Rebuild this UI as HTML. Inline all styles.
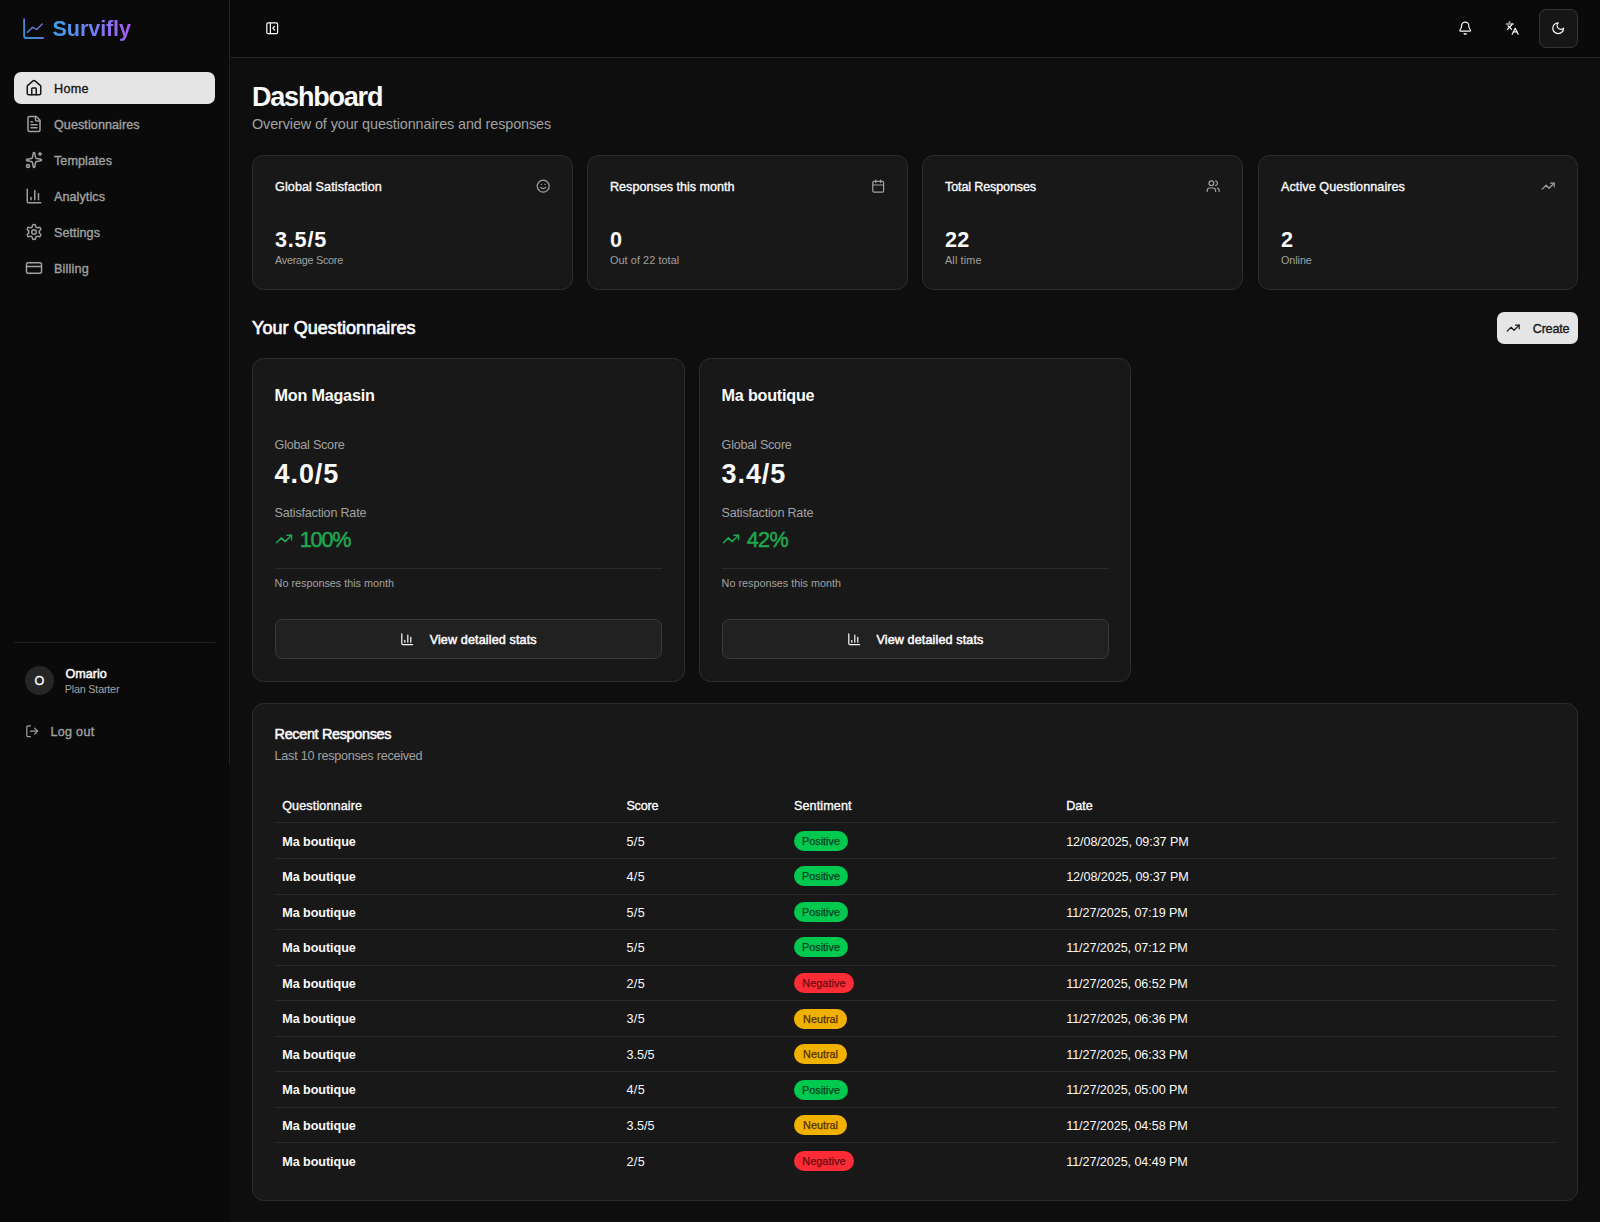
<!DOCTYPE html>
<html lang="en">
<head>
<meta charset="utf-8">
<title>Survifly - Dashboard</title>
<style>
*{box-sizing:border-box;margin:0;padding:0}
html,body{width:1600px;height:1222px;overflow:hidden;background:#0a0a0a;color:#fafafa;
  font-family:"Liberation Sans",sans-serif;font-size:12.6px;line-height:18px;font-weight:400}
body{position:relative}
#main{position:absolute;left:230.6px;top:58px;right:0;bottom:0;background:#0e0e0e}
.ic{display:block;flex:none}
.abs{position:absolute;white-space:nowrap}
.mut{color:#a1a1a1}
.md{-webkit-text-stroke:0.35px currentColor}
.md5{-webkit-text-stroke:0.5px currentColor}
.sb{font-weight:700}
/* sidebar */
#side{position:absolute;left:0;top:0;width:230px;height:765px;border-right:1px solid #222;background:#0a0a0a}
#logo{position:absolute;left:21px;top:16.2px;display:flex;align-items:center;gap:6.4px;height:25.2px}
#logo .t{position:relative;top:.7px;font-size:21.6px;font-weight:700;line-height:28.8px;letter-spacing:-0.11px;background:linear-gradient(90deg,#3aa3f2,#aa5cf6);-webkit-background-clip:text;background-clip:text;color:transparent}
.nav{position:absolute;left:14px;width:201px;height:32.4px;border-radius:7.2px;display:flex;align-items:center;gap:10.8px;padding-left:11.2px;color:#a1a1a1}
.nav.on{background:#e5e5e5;color:#171717}
.nav span{font-size:12.6px;position:relative;top:1.3px;letter-spacing:.07px}
#sep{position:absolute;left:14px;top:642px;width:201px;height:1px;background:#222}
#av{position:absolute;left:25px;top:666px;width:29px;height:29px;padding-top:1.4px;border-radius:50%;background:#262626;display:flex;align-items:center;justify-content:center;font-size:12.6px}
/* header */
#hdr{position:absolute;left:230px;top:0;right:0;height:58px;border-bottom:1px solid #222}
.hb{position:absolute;top:8px;width:39.6px;height:39.6px;display:flex;align-items:center;justify-content:center;border-radius:7.2px}
/* cards */
.card{position:absolute;background:#181818;border:1px solid #2d2d2d;border-radius:11.5px}
.card > *{white-space:nowrap}
.stat{top:155px;width:321px;height:135px}
.stat .ttl{position:absolute;left:22px;top:21.6px;line-height:18px;font-size:12.6px}
.stat .sic{position:absolute;right:21.6px;top:23.4px;color:#a1a1a1}
.stat .val{position:absolute;left:22px;top:70.1px;font-size:21.6px;line-height:28.8px;font-weight:700}
.stat .cap{position:absolute;left:22px;top:97.2px;font-size:10.8px;line-height:14.4px;color:#a1a1a1}
.q{top:358px;width:433px;height:324px}
.q > *{position:absolute;left:21.6px}
.q .ttl{top:23.7px;font-size:16.2px;line-height:25.2px;letter-spacing:-.23px}
.q .l1{top:76.6px;color:#a1a1a1;letter-spacing:-.23px}
.q .v1{top:98.5px;font-size:27px;line-height:32.4px;font-weight:700;letter-spacing:.9px}
.q .l2{top:144.8px;color:#a1a1a1;letter-spacing:-.21px}
.q .v2{top:165.9px;font-size:21.6px;line-height:28.8px;color:#1fa64f;display:flex;align-items:center;gap:7.2px;letter-spacing:-1.2px}
.q .v2 span{position:relative;top:1px}
.q .hr{top:208.6px;right:21.6px;height:1px;background:#2a2a2a}
.q .nr{top:217.3px;font-size:10.8px;line-height:14.4px;color:#a1a1a1}
.q .btn{top:260px;right:21.6px;height:39.6px;border:1px solid #3a3a3a;background:#212121;border-radius:7.2px;display:flex;align-items:center;justify-content:center;gap:15px;padding-right:0}
.q .btn span{position:relative;top:1px;letter-spacing:.12px}
#rr{left:252px;top:703px;width:1326px;height:498px}
#rr .ttl{position:absolute;left:21.6px;top:20.6px;font-size:14.4px;line-height:18px}
.tr{position:absolute;left:21.6px;right:21.4px}
.tr.bb{border-bottom:1px solid #2a2a2a}
.tr > span{position:absolute;top:0;bottom:0;display:flex;align-items:center;white-space:nowrap}
.tr > span.t{padding-top:1.4px}
.tr.h > span.t{padding-top:3.4px}
.tr.r0 > span.t{padding-top:3.4px}
.c1{left:7.6px}.c2{left:351.8px}.c3{left:519.4px}.c4{left:791.6px}
.tr > span.c3{display:block}
.badge{position:absolute;left:0;display:flex;align-items:center;justify-content:center;height:20px;border-radius:10px;font-size:10.8px;line-height:14.4px;-webkit-text-stroke:.25px currentColor}
.pos{width:54px}.neg{width:60px}.neu{width:53px}
.pos{background:#00c950;color:#06401f}
.neg{background:#fb2c36;color:#650e13;letter-spacing:.1px}
.neu{background:#f0b100;color:#552f07}

.q2 .hr,.q2 .btn{right:21px}

</style>
</head>
<body>
<main id="main"></main>
<aside id="side">
  <div id="logo"><svg class="ic" style="width:25.2px;height:25.2px" viewBox="0 0 24 24" fill="none" stroke="url(#lg)" stroke-width="1.8" stroke-linecap="round" stroke-linejoin="round" opacity=".88"><defs><linearGradient id="lg" gradientUnits="userSpaceOnUse" x1="2" y1="22" x2="22" y2="2"><stop offset="0" stop-color="#2fa9ee"/><stop offset="1" stop-color="#a66cf5"/></linearGradient></defs><path d="M3 3v16a2 2 0 0 0 2 2h16"/><path stroke-width="1.35" d="M6.100 15.600 11 10.800 15 12.800 20.200 7.600"/></svg><span class="t">Survifly</span></div>
  <div class="nav on" style="top:72px"><svg class="ic" style="width:18px;height:18px;" viewBox="0 0 24 24" fill="none" stroke="currentColor" stroke-width="2" stroke-linecap="round" stroke-linejoin="round" ><path d="M15 21v-8a1 1 0 0 0-1-1h-4a1 1 0 0 0-1 1v8"/><path d="M3 10a2 2 0 0 1 .709-1.528l7-5.999a2 2 0 0 1 2.582 0l7 5.999A2 2 0 0 1 21 10v9a2 2 0 0 1-2 2H5a2 2 0 0 1-2-2z"/></svg><span class="md" style="letter-spacing:.3px">Home</span></div>
  <div class="nav" style="top:108px"><svg class="ic" style="width:18px;height:18px;" viewBox="0 0 24 24" fill="none" stroke="currentColor" stroke-width="2" stroke-linecap="round" stroke-linejoin="round" ><path d="M15 2H6a2 2 0 0 0-2 2v16a2 2 0 0 0 2 2h12a2 2 0 0 0 2-2V7Z"/><path d="M14 2v4a2 2 0 0 0 2 2h4"/><path d="M10 9H8"/><path d="M16 13H8"/><path d="M16 17H8"/></svg><span class="md">Questionnaires</span></div>
  <div class="nav" style="top:144px"><svg class="ic" style="width:18px;height:18px;" viewBox="0 0 24 24" fill="none" stroke="currentColor" stroke-width="2" stroke-linecap="round" stroke-linejoin="round" ><path d="M11.017 2.814a1 1 0 0 1 1.966 0l1.051 5.558a2 2 0 0 0 1.594 1.594l5.558 1.051a1 1 0 0 1 0 1.966l-5.558 1.051a2 2 0 0 0-1.594 1.594l-1.051 5.558a1 1 0 0 1-1.966 0l-1.051-5.558a2 2 0 0 0-1.594-1.594l-5.558-1.051a1 1 0 0 1 0-1.966l5.558-1.051a2 2 0 0 0 1.594-1.594z"/><path d="M20 2v4"/><path d="M22 4h-4"/><circle cx="4" cy="20" r="2"/></svg><span class="md">Templates</span></div>
  <div class="nav" style="top:180px"><svg class="ic" style="width:18px;height:18px;" viewBox="0 0 24 24" fill="none" stroke="currentColor" stroke-width="2" stroke-linecap="round" stroke-linejoin="round" ><path d="M3 3v16a2 2 0 0 0 2 2h16"/><path d="M18 17V9"/><path d="M13 17V5"/><path d="M8 17v-3"/></svg><span class="md">Analytics</span></div>
  <div class="nav" style="top:216px"><svg class="ic" style="width:18px;height:18px;" viewBox="0 0 24 24" fill="none" stroke="currentColor" stroke-width="2" stroke-linecap="round" stroke-linejoin="round" ><path d="M12.22 2h-.44a2 2 0 0 0-2 2v.18a2 2 0 0 1-1 1.73l-.43.25a2 2 0 0 1-2 0l-.15-.08a2 2 0 0 0-2.73.73l-.22.38a2 2 0 0 0 .73 2.73l.15.1a2 2 0 0 1 1 1.72v.51a2 2 0 0 1-1 1.74l-.15.09a2 2 0 0 0-.73 2.73l.22.38a2 2 0 0 0 2.73.73l.15-.08a2 2 0 0 1 2 0l.43.25a2 2 0 0 1 1 1.73V20a2 2 0 0 0 2 2h.44a2 2 0 0 0 2-2v-.18a2 2 0 0 1 1-1.73l.43-.25a2 2 0 0 1 2 0l.15.08a2 2 0 0 0 2.73-.73l.22-.39a2 2 0 0 0-.73-2.73l-.15-.08a2 2 0 0 1-1-1.74v-.5a2 2 0 0 1 1-1.74l.15-.09a2 2 0 0 0 .73-2.73l-.22-.38a2 2 0 0 0-2.73-.73l-.15.08a2 2 0 0 1-2 0l-.43-.25a2 2 0 0 1-1-1.73V4a2 2 0 0 0-2-2z"/><circle cx="12" cy="12" r="3"/></svg><span class="md">Settings</span></div>
  <div class="nav" style="top:252px"><svg class="ic" style="width:18px;height:18px;" viewBox="0 0 24 24" fill="none" stroke="currentColor" stroke-width="2" stroke-linecap="round" stroke-linejoin="round" ><rect width="20" height="14" x="2" y="5" rx="2"/><line x1="2" x2="22" y1="10" y2="10"/></svg><span class="md" style="letter-spacing:.2px">Billing</span></div>
  <div id="sep"></div>
  <div id="av"><span class="md">O</span></div>
  <div class="abs md5" style="left:65.4px;top:665px">Omario</div>
  <div class="abs mut" style="left:64.8px;top:682px;font-size:10.8px;line-height:14.4px;letter-spacing:-.21px">Plan Starter</div>
  <div class="abs mut" style="left:25.2px;top:724px"><svg class="ic" style="width:14.4px;height:14.4px;" viewBox="0 0 24 24" fill="none" stroke="currentColor" stroke-width="2" stroke-linecap="round" stroke-linejoin="round" ><path d="M9 21H5a2 2 0 0 1-2-2V5a2 2 0 0 1 2-2h4"/><polyline points="16 17 21 12 16 7"/><line x1="21" x2="9" y1="12" y2="12"/></svg></div>
  <div class="abs mut md" style="left:50.4px;top:723px;letter-spacing:.3px">Log out</div>
</aside>
<header id="hdr">
  <div class="hb" style="left:22px"><svg class="ic" style="width:14.4px;height:14.4px;" viewBox="0 0 24 24" fill="none" stroke="currentColor" stroke-width="2" stroke-linecap="round" stroke-linejoin="round" ><rect width="18" height="18" x="3" y="3" rx="2"/><path d="M9 3v18"/><path d="m16 15-3-3 3-3"/></svg></div>
  <div class="hb" style="left:1215.4px"><svg class="ic" style="width:14.4px;height:14.4px;" viewBox="0 0 24 24" fill="none" stroke="currentColor" stroke-width="2" stroke-linecap="round" stroke-linejoin="round" ><path d="M10.268 21a2 2 0 0 0 3.464 0"/><path d="M3.262 15.326A1 1 0 0 0 4 17h16a1 1 0 0 0 .74-1.673C19.41 13.956 18 12.499 18 8A6 6 0 0 0 6 8c0 4.499-1.411 5.956-2.738 7.326"/></svg></div>
  <div class="hb" style="left:1262.2px"><svg class="ic" style="width:14.4px;height:14.4px;" viewBox="0 0 24 24" fill="none" stroke="currentColor" stroke-width="2" stroke-linecap="round" stroke-linejoin="round" ><path d="m5 8 6 6"/><path d="m4 14 6-6 2-3"/><path d="M2 5h12"/><path d="M7 2h1"/><path d="m22 22-5-10-5 10"/><path d="M14 18h6"/></svg></div>
  <div class="hb" style="left:1309px;top:9px;width:39px;height:39px;border:1px solid #353535;background:#161616;padding-bottom:1px;padding-right:1px"><svg class="ic" style="width:14.4px;height:14.4px;" viewBox="0 0 24 24" fill="none" stroke="currentColor" stroke-width="2" stroke-linecap="round" stroke-linejoin="round" ><path d="M12 3a6 6 0 0 0 9 9 9 9 0 1 1-9-9Z"/></svg></div>
</header>
<h1 class="abs" style="left:252px;top:81.2px;font-size:27px;line-height:32.4px;font-weight:700;letter-spacing:-1.2px">Dashboard</h1>
<p class="abs mut" style="left:252px;top:113.9px;font-size:14.4px;line-height:21.6px;letter-spacing:-.11px">Overview of your questionnaires and responses</p>

<div class="card stat" style="left:252px"><div class="ttl md" style="letter-spacing:.1px">Global Satisfaction</div><div class="sic"><svg class="ic" style="width:14.4px;height:14.4px;" viewBox="0 0 24 24" fill="none" stroke="currentColor" stroke-width="2" stroke-linecap="round" stroke-linejoin="round" ><circle cx="12" cy="12" r="10"/><path d="M8 14s1.500 2 4 2 4-2 4-2"/><line x1="9" x2="9.010" y1="9" y2="9"/><line x1="15" x2="15.010" y1="9" y2="9"/></svg></div><div class="val" style="letter-spacing:.8px">3.5/5</div><div class="cap" style="letter-spacing:-.25px">Average Score</div></div>
<div class="card stat" style="left:587px"><div class="ttl md">Responses this month</div><div class="sic"><svg class="ic" style="width:14.4px;height:14.4px;" viewBox="0 0 24 24" fill="none" stroke="currentColor" stroke-width="2" stroke-linecap="round" stroke-linejoin="round" ><path d="M8 2v4"/><path d="M16 2v4"/><rect width="18" height="18" x="3" y="4" rx="2"/><path d="M3 10h18"/></svg></div><div class="val">0</div><div class="cap" style="letter-spacing:.1px">Out of 22 total</div></div>
<div class="card stat" style="left:922px"><div class="ttl md" style="letter-spacing:-.14px">Total Responses</div><div class="sic"><svg class="ic" style="width:14.4px;height:14.4px;" viewBox="0 0 24 24" fill="none" stroke="currentColor" stroke-width="2" stroke-linecap="round" stroke-linejoin="round" ><path d="M16 21v-2a4 4 0 0 0-4-4H6a4 4 0 0 0-4 4v2"/><circle cx="9" cy="7" r="4"/><path d="M22 21v-2a4 4 0 0 0-3-3.870"/><path d="M16 3.130a4 4 0 0 1 0 7.750"/></svg></div><div class="val" style="letter-spacing:.2px">22</div><div class="cap" style="letter-spacing:.15px">All time</div></div>
<div class="card stat" style="left:1258px;width:320px"><div class="ttl md" style="letter-spacing:.07px">Active Questionnaires</div><div class="sic"><svg class="ic" style="width:14.4px;height:14.4px;" viewBox="0 0 24 24" fill="none" stroke="currentColor" stroke-width="2" stroke-linecap="round" stroke-linejoin="round" ><polyline points="22 7 13.500 15.500 8.500 10.500 2 17"/><polyline points="16 7 22 7 22 13"/></svg></div><div class="val">2</div><div class="cap" style="letter-spacing:-.08px">Online</div></div>

<h2 class="abs" style="left:252px;top:315.6px;font-size:18px;line-height:25.2px;font-weight:400;letter-spacing:.06px;-webkit-text-stroke:.7px currentColor">Your Questionnaires</h2>
<div class="abs" style="left:1497.4px;top:311.8px;width:81px;height:32.4px;border-radius:7.2px;background:#e5e5e5;color:#171717;display:flex;align-items:center;padding-left:8.8px;gap:12.2px"><svg class="ic" style="width:14.4px;height:14.4px;" viewBox="0 0 24 24" fill="none" stroke="currentColor" stroke-width="2" stroke-linecap="round" stroke-linejoin="round" ><polyline points="22 7 13.500 15.500 8.500 10.500 2 17"/><polyline points="16 7 22 7 22 13"/></svg><span class="md" style="position:relative;top:1.3px;letter-spacing:-.22px">Create</span></div>

<div class="card q" style="left:252px">
  <div class="ttl sb">Mon Magasin</div>
  <div class="l1">Global Score</div><div class="v1">4.0/5</div>
  <div class="l2">Satisfaction Rate</div><div class="v2"><svg class="ic" style="width:18px;height:18px;" viewBox="0 0 24 24" fill="none" stroke="currentColor" stroke-width="2" stroke-linecap="round" stroke-linejoin="round" ><polyline points="22 7 13.500 15.500 8.500 10.500 2 17"/><polyline points="16 7 22 7 22 13"/></svg><span class="md5">100%</span></div>
  <div class="hr"></div><div class="nr">No responses this month</div>
  <div class="btn"><svg class="ic" style="width:14.4px;height:14.4px;" viewBox="0 0 24 24" fill="none" stroke="currentColor" stroke-width="2" stroke-linecap="round" stroke-linejoin="round" ><path d="M3 3v16a2 2 0 0 0 2 2h16"/><path d="M18 17V9"/><path d="M13 17V5"/><path d="M8 17v-3"/></svg><span class="md5">View detailed stats</span></div>
</div>
<div class="card q q2" style="left:699px;width:432px">
  <div class="ttl sb">Ma boutique</div>
  <div class="l1">Global Score</div><div class="v1">3.4/5</div>
  <div class="l2">Satisfaction Rate</div><div class="v2"><svg class="ic" style="width:18px;height:18px;" viewBox="0 0 24 24" fill="none" stroke="currentColor" stroke-width="2" stroke-linecap="round" stroke-linejoin="round" ><polyline points="22 7 13.500 15.500 8.500 10.500 2 17"/><polyline points="16 7 22 7 22 13"/></svg><span class="md5" style="letter-spacing:-.7px">42%</span></div>
  <div class="hr"></div><div class="nr">No responses this month</div>
  <div class="btn"><svg class="ic" style="width:14.4px;height:14.4px;" viewBox="0 0 24 24" fill="none" stroke="currentColor" stroke-width="2" stroke-linecap="round" stroke-linejoin="round" ><path d="M3 3v16a2 2 0 0 0 2 2h16"/><path d="M18 17V9"/><path d="M13 17V5"/><path d="M8 17v-3"/></svg><span class="md5">View detailed stats</span></div>
</div>

<div class="card" id="rr">
  <div class="ttl md5" style="letter-spacing:-.32px">Recent Responses</div>
  <div class="abs mut" style="left:21.6px;top:43.2px;letter-spacing:-.24px">Last 10 responses received</div>
  <div class="tr bb h" style="top:82px;height:37px"><span class="c1 t md" style="letter-spacing:.12px">Questionnaire</span><span class="c2 t md" style="letter-spacing:-.2px">Score</span><span class="c3 t md" style="letter-spacing:.1px;display:flex">Sentiment</span><span class="c4 t md">Date</span></div>
<div class="tr bb r0" style="top:119px;height:36px"><span class="c1 t sb" style="letter-spacing:-.05px">Ma boutique</span><span class="c2 t" style="letter-spacing:.4px">5/5</span><span class="c3"><span class="badge pos" style="top:8px">Positive</span></span><span class="c4 t" style="letter-spacing:-.07px">12/08/2025, 09:37 PM</span></div>
<div class="tr bb" style="top:155px;height:36px"><span class="c1 t sb" style="letter-spacing:-.05px">Ma boutique</span><span class="c2 t" style="letter-spacing:.4px">4/5</span><span class="c3"><span class="badge pos" style="top:7px">Positive</span></span><span class="c4 t" style="letter-spacing:-.07px">12/08/2025, 09:37 PM</span></div>
<div class="tr bb" style="top:191px;height:35px"><span class="c1 t sb" style="letter-spacing:-.05px">Ma boutique</span><span class="c2 t" style="letter-spacing:.4px">5/5</span><span class="c3"><span class="badge pos" style="top:7px">Positive</span></span><span class="c4 t" style="letter-spacing:-.07px">11/27/2025, 07:19 PM</span></div>
<div class="tr bb" style="top:226px;height:36px"><span class="c1 t sb" style="letter-spacing:-.05px">Ma boutique</span><span class="c2 t" style="letter-spacing:.4px">5/5</span><span class="c3"><span class="badge pos" style="top:7px">Positive</span></span><span class="c4 t" style="letter-spacing:-.07px">11/27/2025, 07:12 PM</span></div>
<div class="tr bb" style="top:262px;height:35px"><span class="c1 t sb" style="letter-spacing:-.05px">Ma boutique</span><span class="c2 t" style="letter-spacing:.4px">2/5</span><span class="c3"><span class="badge neg" style="top:7px">Negative</span></span><span class="c4 t" style="letter-spacing:-.07px">11/27/2025, 06:52 PM</span></div>
<div class="tr bb" style="top:297px;height:36px"><span class="c1 t sb" style="letter-spacing:-.05px">Ma boutique</span><span class="c2 t" style="letter-spacing:.4px">3/5</span><span class="c3"><span class="badge neu" style="top:8px">Neutral</span></span><span class="c4 t" style="letter-spacing:-.07px">11/27/2025, 06:36 PM</span></div>
<div class="tr bb" style="top:333px;height:35px"><span class="c1 t sb" style="letter-spacing:-.05px">Ma boutique</span><span class="c2 t" style="letter-spacing:.05px">3.5/5</span><span class="c3"><span class="badge neu" style="top:7px">Neutral</span></span><span class="c4 t" style="letter-spacing:-.07px">11/27/2025, 06:33 PM</span></div>
<div class="tr bb" style="top:368px;height:36px"><span class="c1 t sb" style="letter-spacing:-.05px">Ma boutique</span><span class="c2 t" style="letter-spacing:.4px">4/5</span><span class="c3"><span class="badge pos" style="top:8px">Positive</span></span><span class="c4 t" style="letter-spacing:-.07px">11/27/2025, 05:00 PM</span></div>
<div class="tr bb" style="top:404px;height:35px"><span class="c1 t sb" style="letter-spacing:-.05px">Ma boutique</span><span class="c2 t" style="letter-spacing:.05px">3.5/5</span><span class="c3"><span class="badge neu" style="top:7px">Neutral</span></span><span class="c4 t" style="letter-spacing:-.07px">11/27/2025, 04:58 PM</span></div>
<div class="tr" style="top:439px;height:36px"><span class="c1 t sb" style="letter-spacing:-.05px">Ma boutique</span><span class="c2 t" style="letter-spacing:.4px">2/5</span><span class="c3"><span class="badge neg" style="top:8px">Negative</span></span><span class="c4 t" style="letter-spacing:-.07px">11/27/2025, 04:49 PM</span></div>
</div>

</body>
</html>
